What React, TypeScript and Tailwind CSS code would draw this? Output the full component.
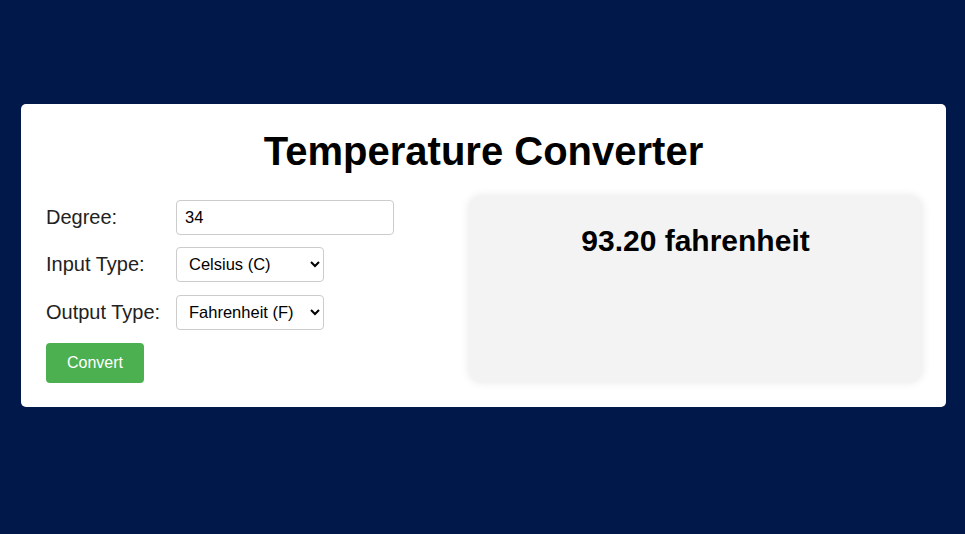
import React, { useState } from "react";

const App = () => {
  const [degree, setDegree] = useState("34");
  const [inputType, setInputType] = useState("celsius");
  const [outputType, setOutputType] = useState("fahrenheit");
  const [result, setResult] = useState("93.20 fahrenheit");

  const convert = () => {
    const d = parseFloat(degree);
    if (isNaN(d)) return;
    let c = d;
    if (inputType === "fahrenheit") c = ((d - 32) * 5) / 9;
    if (inputType === "kelvin") c = d - 273.15;
    let out = c;
    if (outputType === "fahrenheit") out = (c * 9) / 5 + 32;
    if (outputType === "kelvin") out = c + 273.15;
    setResult(`${out.toFixed(2)} ${outputType}`);
  };

  return (
    <div className="min-h-screen w-full bg-[#01184a] flex items-center justify-center pb-[24px] font-['Liberation_Sans',Arial,sans-serif]">
      <div className="w-[925px] ml-[2px] bg-white rounded-[5px] px-6 pt-6 pb-6">
        <h1 className="text-[40px] font-bold text-black text-center leading-[46px] mb-[22px]">
          Temperature Converter
        </h1>
        <div className="flex justify-between">
          {/* form */}
          <div className="flex flex-col pl-[1px] pt-[4px]">
            <div className="flex items-center h-[35px]">
              <label className="w-[130px] text-[20px] text-[#222]">Degree:</label>
              <input
                className="w-[218px] h-[35px] border border-[#ccc] rounded-[4px] px-2 text-[16.5px] text-black outline-none"
                value={degree}
                onChange={(e) => setDegree(e.target.value)}
              />
            </div>
            <div className="flex items-center h-[35px] mt-[12px]">
              <label className="w-[130px] text-[20px] text-[#222]">Input Type:</label>
              <select
                className="w-[148px] h-[35px] border border-[#ccc] rounded-[4px] pl-2 pr-1 text-[16.5px] text-black bg-white"
                value={inputType}
                onChange={(e) => setInputType(e.target.value)}
              >
                <option value="celsius">Celsius (C)</option>
                <option value="fahrenheit">Fahrenheit (F)</option>
                <option value="kelvin">Kelvin (K)</option>
              </select>
            </div>
            <div className="flex items-center h-[35px] mt-[13px]">
              <label className="w-[130px] text-[20px] text-[#222]">Output Type:</label>
              <select
                className="w-[148px] h-[35px] border border-[#ccc] rounded-[4px] pl-2 pr-1 text-[16.5px] text-black bg-white"
                value={outputType}
                onChange={(e) => setOutputType(e.target.value)}
              >
                <option value="celsius">Celsius (C)</option>
                <option value="fahrenheit">Fahrenheit (F)</option>
                <option value="kelvin">Kelvin (K)</option>
              </select>
            </div>
            <button
              onClick={convert}
              className="mt-[13px] w-[98px] h-[40px] bg-[#4caf50] text-white text-[16px] rounded-[4px]"
            >
              Convert
            </button>
          </div>

          {/* result */}
          <div className="w-[453px] h-[186px] bg-[#f3f3f3] rounded-[12px] shadow-[0_0_10px_rgba(0,0,0,0.1)] pt-[28px] text-center">
            <h2 className="text-[30px] font-bold text-black leading-[34px]">{result}</h2>
          </div>
        </div>
      </div>
    </div>
  );
};

export default App;
